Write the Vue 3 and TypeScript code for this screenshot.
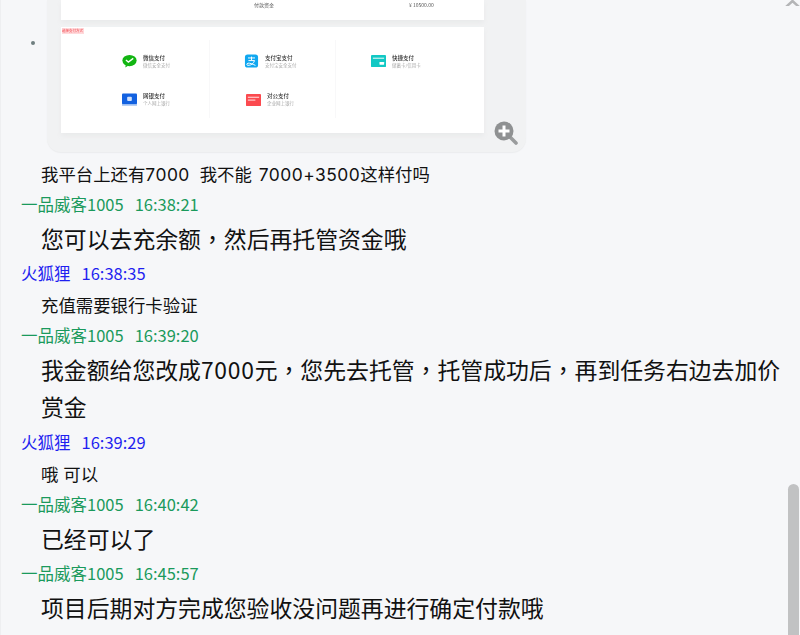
<script setup lang="ts">
type Row = { kind: 'name' | 'big' | 'small'; who?: 'green' | 'blue'; name?: string; time?: string; lines?: string[] }
const rows: Row[] = [
  { kind: 'small', lines: ['我平台上还有7000\u00a0\u00a0我不能 7000+3500这样付吗'] },
  { kind: 'name', who: 'green', name: '一品威客1005', time: '16:38:21' },
  { kind: 'big', lines: ['您可以去充余额，然后再托管资金哦'] },
  { kind: 'name', who: 'blue', name: '火狐狸', time: '16:38:35' },
  { kind: 'small', lines: ['充值需要银行卡验证'] },
  { kind: 'name', who: 'green', name: '一品威客1005', time: '16:39:20' },
  { kind: 'big', lines: ['我金额给您改成7000元，您先去托管，托管成功后，再到任务右边去加价', '赏金'] },
  { kind: 'name', who: 'blue', name: '火狐狸', time: '16:39:29' },
  { kind: 'small', lines: ['哦 可以'] },
  { kind: 'name', who: 'green', name: '一品威客1005', time: '16:40:42' },
  { kind: 'big', lines: ['已经可以了'] },
  { kind: 'name', who: 'green', name: '一品威客1005', time: '16:45:57' },
  { kind: 'big', lines: ['项目后期对方完成您验收没问题再进行确定付款哦'] },
]
const pays = [
  { id: 'wechat', title: '微信支付', sub: '微信安全支付' },
  { id: 'alipay', title: '支付宝支付', sub: '支付宝安全支付' },
  { id: 'quick', title: '快捷支付', sub: '储蓄卡/信用卡' },
  { id: 'bank', title: '网银支付', sub: '个人网上银行' },
  { id: 'corp', title: '对公支付', sub: '企业网上银行' },
]
const segs = (t: string) => t.split(/(，| ?[0-9+]+)/).filter(Boolean)
const segClass = (s: string) => (s === '，' ? 'comma' : /[0-9]/.test(s) ? 'num' : 'txt')
</script>

<template>
  <div class="page">
    <div class="shot-row">
      <span class="bullet"></span>
      <div class="shot">
        <div class="sheet">
          <div class="panel-top">
            <span class="pt-label">付款资金</span>
            <span class="pt-value">¥ 10500.00</span>
          </div>
          <div class="panel-pay">
            <span class="tag">选择支付方式</span>
            <div v-for="p in pays" :key="p.id" class="pay" :class="'pay-' + p.id">
              <svg v-if="p.id === 'wechat'" class="ico" viewBox="0 0 16 14">
                <ellipse cx="8" cy="6.5" rx="7.6" ry="6" fill="#12b512" />
                <path d="M4 11l-.5 3 3-2z" fill="#12b512" />
                <path d="M4.2 6l2.6 2.2L12 4.2" fill="none" stroke="#fff" stroke-width="1.4" />
              </svg>
              <svg v-else-if="p.id === 'alipay'" class="ico" viewBox="0 0 16 16">
                <rect x="0.5" y="0.5" width="15" height="15" rx="3" fill="#10a7f0" />
                <path d="M4 4.5h8M8 3v4M4.500 7.500h7c-1 3-3.500 5.500-7.500 5.500-1.500 0-2-2 0-2.500 2-.4 5 1 8.500 2.500" fill="none" stroke="#fff" stroke-width="1.100" />
              </svg>
              <svg v-else-if="p.id === 'quick'" class="ico" viewBox="0 0 16 13">
                <rect width="16" height="13" rx="1" fill="#12c8c4" />
                <rect x="2" y="3" width="12" height="1" fill="#fff" />
                <rect x="9" y="7.500" width="5" height="3" rx=".5" fill="#fff" />
              </svg>
              <svg v-else-if="p.id === 'bank'" class="ico" viewBox="0 0 16 14">
                <rect width="16" height="11.500" rx="1" fill="#1261e0" />
                <rect y="11.500" width="16" height="1.500" fill="#8fb4ee" />
                <rect x="5.500" y="3.500" width="5" height="4.500" rx="1" fill="#cfe0fb" />
              </svg>
              <svg v-else class="ico" viewBox="0 0 16 13">
                <rect width="16" height="13" rx="1" fill="#fb4a4f" />
                <rect x="2" y="3" width="12" height="1.200" fill="#ffd3d4" />
                <rect x="2" y="6" width="8" height="1.200" fill="#ffd3d4" />
              </svg>
              <div class="pay-text">
                <div class="pay-title">{{ p.title }}</div>
                <div class="pay-sub">{{ p.sub }}</div>
              </div>
            </div>
            <i class="rule rule-a"></i>
            <i class="rule rule-b"></i>
          </div>
        </div>
        <svg class="zoom-icon" viewBox="0 0 24 24">
          <path d="M16 16l6 6" stroke="#9a9c9d" stroke-width="3.600" stroke-linecap="round" />
          <circle cx="10" cy="10" r="9.500" fill="#8f9192" />
          <path d="M10 4.500v11M4.500 10h11" stroke="#fff" stroke-width="3" />
        </svg>
      </div>
    </div>

    <div class="log">
      <template v-for="(r, i) in rows" :key="i">
        <div v-if="r.kind === 'name'" class="name" :class="r.who">
          <span>{{ r.name }}</span><span class="time">{{ r.time }}</span>
        </div>
        <div v-else :class="[r.kind, { two: (r.lines ?? []).length > 1 }]">
          <div v-for="(line, k) in r.lines" :key="k" class="line">
            <span v-for="(s, j) in segs(line)" :key="j" :class="segClass(s)">{{ s }}</span>
          </div>
        </div>
      </template>
    </div>

    <svg class="arrow" viewBox="0 0 15 6">
      <path d="M1 7l6.500-6 6.500 6" fill="none" stroke="#b4b5b7" stroke-width="2.500" />
    </svg>
    <div class="thumb"></div>
  </div>
</template>

<style>
html, body { margin: 0; background: #f6f7f9; }
</style>

<style scoped>
.page {
  position: relative;
  width: 800px;
  height: 635px;
  overflow: hidden;
  box-sizing: border-box;
  border-left: 1px solid #eeeff1;
  background: #f6f7f9;
  font-family: "Noto Sans CJK SC", "Noto Sans", sans-serif;
  color: #111;
}
.shot-row { height: 152px; position: relative; padding-left: 46px; }
.bullet {
  position: absolute;
  left: 30px;
  top: 41px;
  width: 4px;
  height: 4px;
  border-radius: 50%;
  background: #6f7f80;
}
.shot {
  position: relative;
  width: 479px;
  height: 152px;
  box-sizing: border-box;
  padding: 0 42px 0 14px;
  background: #f1f2f3;
  border-radius: 0 0 14px 14px;
  box-shadow: 0 1px 1px #ebecee;
}
.sheet { filter: blur(0.45px); }
.panel-top {
  position: relative;
  height: 20px;
  background: #fff;
  font-size: 5px;
  color: #555;
  box-shadow: 0 3px 5px #e9eaeb;
}
.pt-label { position: absolute; left: 193px; top: 1px; }
.pt-value { position: absolute; left: 348px; top: 1px; }
.panel-pay {
  position: relative;
  margin-top: 7px;
  height: 106px;
  box-sizing: border-box;
  padding: 15px 0 14px;
  background: #fff;
  display: grid;
  grid-template-columns: 148px 126px 148px;
  grid-template-rows: 38px 39px;
  box-shadow: 0 3px 5px #e9eaeb;
}
.tag {
  position: absolute;
  left: 1px;
  top: 1px;
  width: 22px;
  height: 6px;
  overflow: hidden;
  background: #ffd9db;
  color: #f0434a;
  font-size: 3.500px;
  line-height: 6px;
  white-space: nowrap;
}
.rule { position: absolute; top: 13px; bottom: 15px; width: 1px; background: #f8f8f9; }
.rule-a { left: 148px; }
.rule-b { left: 274px; }
.pay { display: flex; align-items: center; gap: 6px; padding-left: 36px; }
.pay-wechat, .pay-bank { padding-left: 61px; }
.pay-alipay { padding-left: 35px; }
.pay-corp { padding-left: 37px; }
.ico { width: 15px; height: 14px; flex: none; }
.pay-title { font-size: 5.500px; line-height: 7px; color: #333; font-weight: 500; white-space: nowrap; }
.pay-sub { font-size: 4.500px; line-height: 6px; color: #aaa; white-space: nowrap; }
.zoom-icon { position: absolute; left: 447px; top: 121px; width: 24px; height: 24px; }

.log { padding: 6px 0 0 20px; }
.line { white-space: pre; }
.name { height: 31px; line-height: 31px; font-size: 16.500px; white-space: nowrap; }
.name.green { color: #1a9a5c; }
.name.blue { color: #1f1ff0; }
.time { margin-left: 11px; }
.small {
  height: 31px;
  box-sizing: border-box;
  padding: 1px 0 0 20px;
  line-height: 31px;
  font-family: Inter, "Noto Sans CJK SC", sans-serif;
  font-size: 17.400px;
}
.small .num { letter-spacing: 0.5px; word-spacing: 1.500px; }
.big {
  line-height: 37px;
  padding: 0 0 1px 20px;
  font-size: 22.850px;
  text-spacing-trim: space-all;
}
.big.two { padding-bottom: 2px; }
.big .num { letter-spacing: 0.750px; }
.comma { font-family: "Noto Sans CJK TC", sans-serif; }

.arrow { position: absolute; right: 0; top: 0; width: 15px; height: 6px; }
.thumb {
  position: absolute;
  right: 1px;
  top: 484px;
  width: 11px;
  height: 160px;
  border-radius: 6px;
  background: #c1c2c3;
}
</style>
